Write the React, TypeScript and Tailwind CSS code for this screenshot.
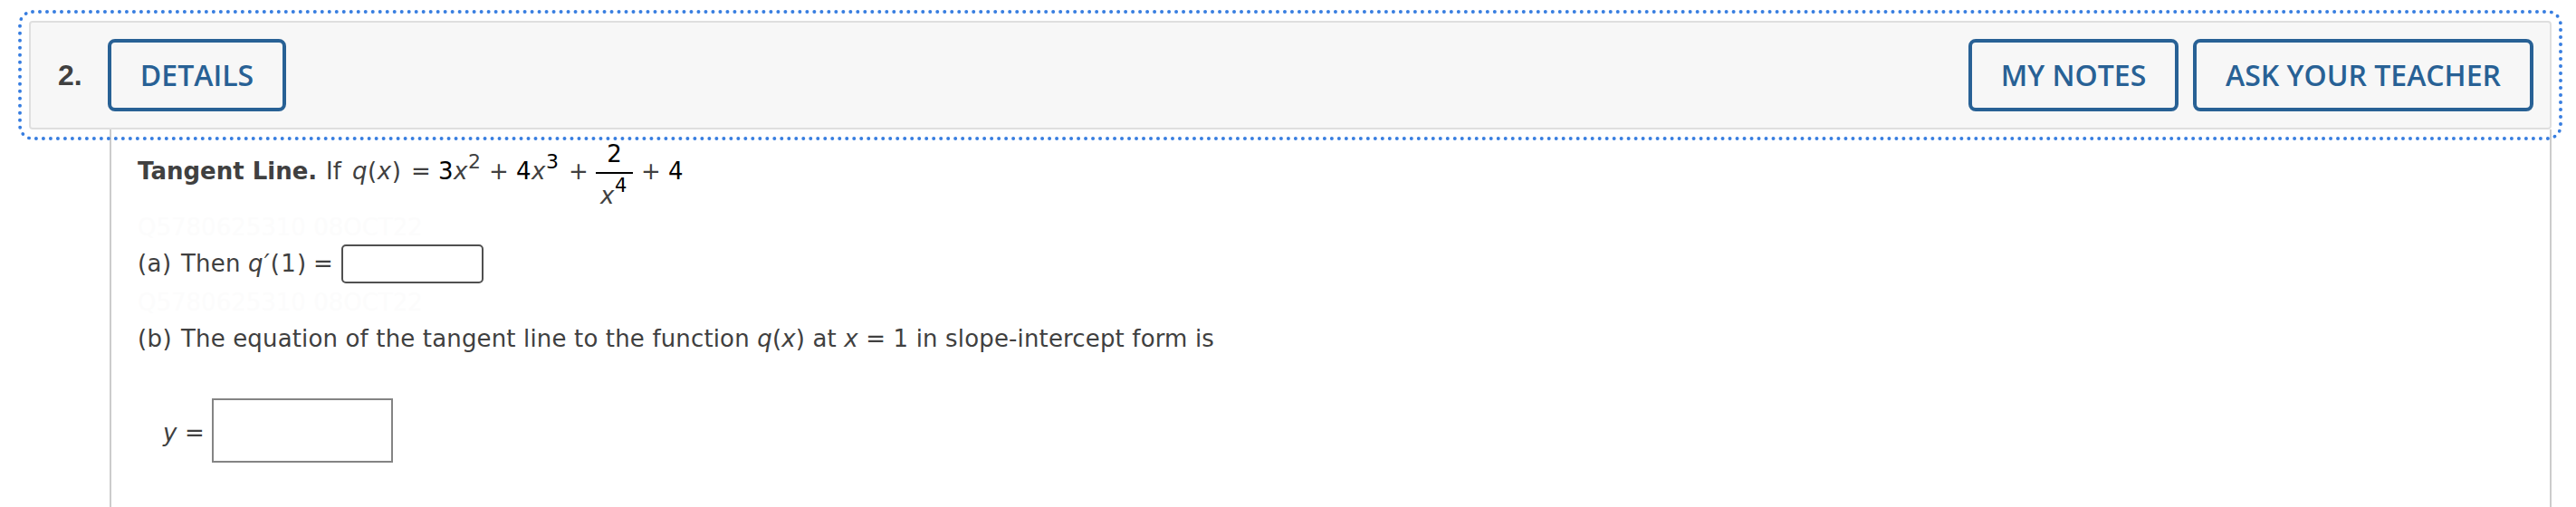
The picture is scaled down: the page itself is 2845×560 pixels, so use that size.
import type { ReactNode } from "react";

const HeaderButton = ({
  children,
  className,
}: {
  children: ReactNode;
  className: string;
}) => (
  <button
    className={`h-20 border-4 border-[#286195] rounded-lg text-[#286195] font-['Open_Sans',sans-serif] font-semibold text-[32px] leading-[44px] whitespace-nowrap ${className}`}
  >
    {children}
  </button>
);

// light tag line printed between the parts of the question
const QuestionTag = () => (
  <p className="h-8 w-fit text-[#fcfcfc] select-none">Q5780625310 08OCT22</p>
);

const App = () => {
  return (
    <div className="h-[560px] overflow-hidden bg-white pt-[23px] pl-8 pr-[27px] font-['DejaVu_Sans',sans-serif] text-[26px] leading-8 text-[#404040] whitespace-nowrap">
      <header className="relative z-10 h-[120px] flex items-center justify-between border-2 border-[#dfdfdf] rounded-[4px] bg-[#f7f7f7] pl-[30px] pr-[18px] outline-4 outline-dotted outline-[#387ee0] outline-offset-8">
        <div className="flex items-center">
          <span className="w-[55px] font-['Liberation_Sans',sans-serif] font-bold text-[32px] leading-9">
            2.
          </span>
          <HeaderButton className="w-[197px]">DETAILS</HeaderButton>
        </div>
        <div className="flex items-center gap-4">
          <HeaderButton className="w-[232px]">MY NOTES</HeaderButton>
          <HeaderButton className="w-[376px]">ASK YOUR TEACHER</HeaderButton>
        </div>
      </header>

      <main className="ml-[89px] h-[417px] border-x-2 border-[#ccc] pl-[29px] pt-[10px]">
        <div className="flex h-[82px] pt-5">
          <b className="w-[208px]">Tangent Line.</b>
          <span className="w-[29px]">If</span>
          <span className="w-[65px] tracking-[0.6px]">
            <i>q</i>(<i>x</i>)
          </span>
          <span className="w-[30px]">=</span>
          <span className="w-[17px] text-black">3</span>
          <i className="w-[16px]">x</i>
          <span className="w-[23px] -mt-[10px] text-[22px]">2</span>
          <span className="w-[30px]">+</span>
          <span className="w-[17px] text-black">4</span>
          <i className="w-[16px]">x</i>
          <span className="w-[25px] -mt-[10px] text-[22px] text-black">3</span>
          <span className="w-[30px]">+</span>
          <div className="-mt-[19px] w-[41px] h-[82px] flex flex-col items-center">
            <span className="h-9 text-black">2</span>
            <div className="w-full h-[2px] shrink-0 bg-black" />
            <div className="w-full flex pl-[5px] pt-2">
              <i className="w-[16px]">x</i>
              <span className="-mt-[11px] text-[21px] text-black">4</span>
            </div>
          </div>
          <span className="ml-[9px] w-[30px]">+</span>
          <span className="text-black">4</span>
        </div>

        <QuestionTag />

        <div className="flex h-[51px] pt-2">
          <span className="w-[48px] tracking-[0.4px]">(a)</span>
          <span className="w-[74px] tracking-[0.2px]">Then</span>
          <span className="w-[72px] tracking-[1.2px]">
            <i>q′</i>(1)
          </span>
          <span className="w-[30px]">=</span>
          <input
            type="text"
            className="ml-px -mt-[5px] w-[157px] h-[43px] border-2 border-[#505050] rounded-[5px] bg-white"
          />
        </div>

        <QuestionTag />

        <div className="flex h-[90px] pt-2">
          <span className="w-[48px] tracking-[0.4px]">(b)</span>
          <p className="tracking-[0.15px]">
            The equation of the tangent line to the function <i>q</i>(<i>x</i>)
            at <i>x</i> = 1 in slope-intercept form is
          </p>
        </div>

        <div className="flex pl-[28px]">
          <i className="w-[24px] mt-[22px]">y</i>
          <span className="w-[30px] mt-[22px]">=</span>
          <input
            type="text"
            className="w-[200px] h-[71px] border-2 border-[#848484] bg-white"
          />
        </div>
      </main>
    </div>
  );
};

export default App;
